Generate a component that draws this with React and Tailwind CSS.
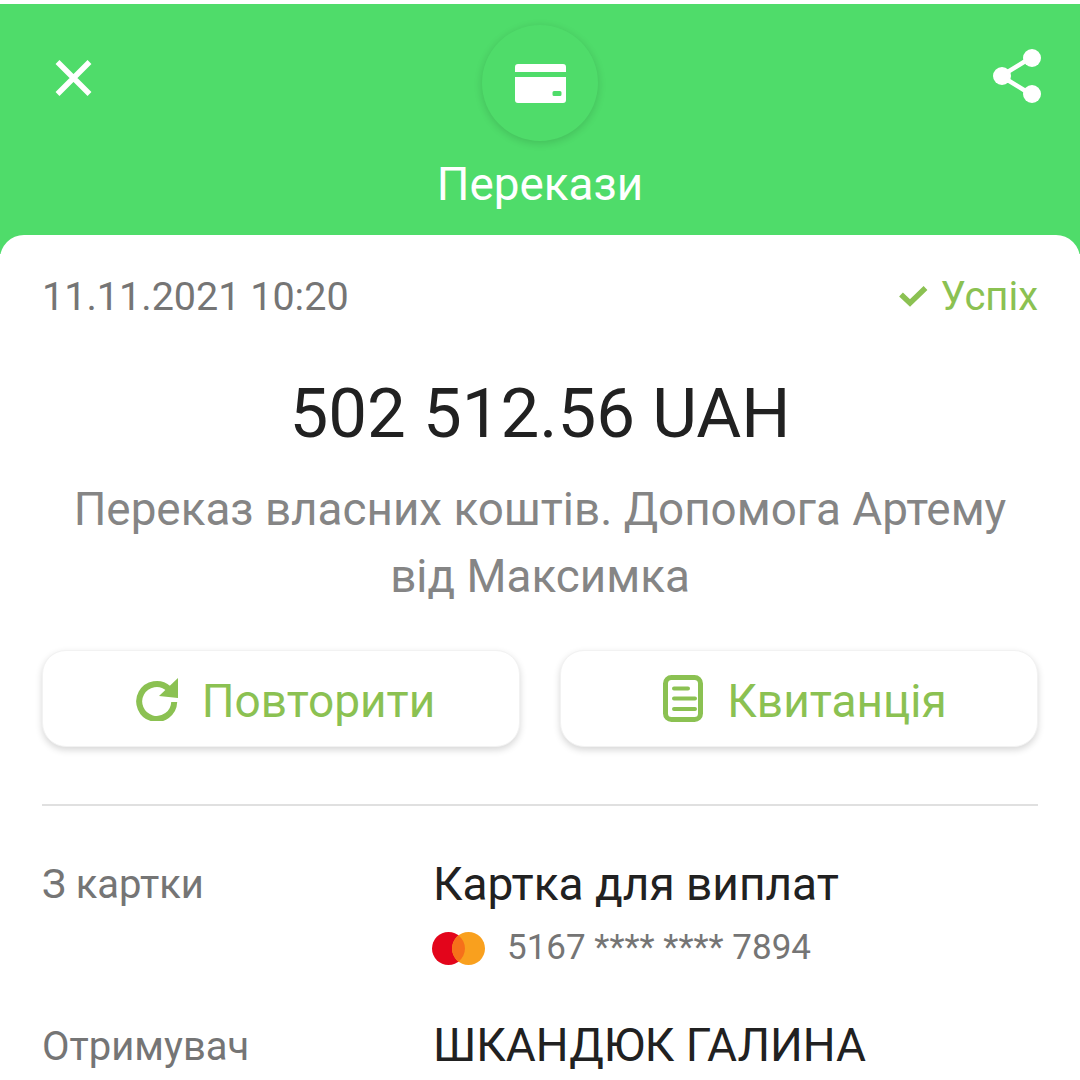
function ActionButton({ icon, label }) {
  return (
    <button className="flex-1 h-[97px] pl-[9px] rounded-[24px] bg-white border border-[#f2f2f2] shadow-[0_3px_7px_rgba(0,0,0,0.16)] flex items-center justify-center gap-[24px] text-[#8bc152] text-[46px] leading-none">
      {icon}
      <span className="pt-[5px]">{label}</span>
    </button>
  );
}

function CloseIcon() {
  return (
    <svg width="37" height="38" viewBox="0 0 37 38">
      <path d="M2.500 3 34.500 35M34.500 3 2.500 35" fill="none" stroke="#fff" strokeWidth="5.500" />
    </svg>
  );
}

function CardIcon() {
  return (
    <svg width="51" height="39" viewBox="0 0 51 39">
      <path fillRule="evenodd" fill="#fff" d="M3 0h45a3 3 0 0 1 3 3v5H0V3a3 3 0 0 1 3-3zM0 13h51v23a3 3 0 0 1-3 3H3a3 3 0 0 1-3-3zM39 27a1.500 1.500 0 0 0-1.500 1.500v2a1.500 1.500 0 0 0 1.500 1.500h6a1.500 1.500 0 0 0 1.500-1.500v-2a1.500 1.500 0 0 0-1.500-1.500z" />
    </svg>
  );
}

function ShareIcon() {
  return (
    <svg width="48" height="54" viewBox="0 0 48 54">
      <path d="M39 8 8 27l31 19" fill="none" stroke="#fff" strokeWidth="4.500" />
      <circle cx="39" cy="9" r="9" fill="#fff" />
      <circle cx="9" cy="27" r="9" fill="#fff" />
      <circle cx="39" cy="45" r="9" fill="#fff" />
    </svg>
  );
}

function CheckIcon() {
  return (
    <svg width="30" height="22" viewBox="0 0 30 22" className="-mt-[2px]">
      <path d="M2 9.500 11 18 26.500 3" fill="none" stroke="#8bc152" strokeWidth="5.500" />
    </svg>
  );
}

function RepeatIcon() {
  return (
    <svg width="42" height="44" viewBox="0 0 42 44">
      <path d="M32.500 11.500A17.500 17.500 0 1 0 38.200 25" fill="none" stroke="#8bc152" strokeWidth="6" />
      <path d="M42 1v20L23 19z" fill="#8bc152" />
    </svg>
  );
}

function ReceiptIcon() {
  return (
    <svg width="40" height="47" viewBox="0 0 40 47" className="ml-[3px]">
      <rect x="2.500" y="2.500" width="35" height="42" rx="6" fill="none" stroke="#8bc152" strokeWidth="5" />
      <path d="M11 13.500h14M11 23.500h21M11 34h21" stroke="#8bc152" strokeWidth="4" strokeLinecap="round" />
    </svg>
  );
}

function MastercardIcon() {
  return (
    <svg width="53" height="33" viewBox="0 0 53 33" className="-ml-[1px]">
      <circle cx="16.500" cy="16.500" r="16.500" fill="#e3051b" />
      <circle cx="36.500" cy="16.500" r="16.500" fill="#f9a01e" />
      <path d="M26.500 3.400a16.500 16.500 0 0 1 0 26.200a16.500 16.500 0 0 1 0-26.200z" fill="#f6701a" />
    </svg>
  );
}

export default function App() {
  return (
    <div className="w-[1080px] h-[1080px] overflow-hidden bg-white pt-[4px] font-['Roboto',sans-serif]">
      <header className="h-[250px] bg-[#4fdc6a] px-[42px] pt-[21px] flex flex-col items-center">
        <div className="w-full flex justify-between items-start">
          <div className="w-[100px] pt-[34px] pl-[13px]">
            <CloseIcon />
          </div>
          <div className="w-[116px] h-[116px] rounded-full bg-[#4fdc6a] shadow-[0_2px_8px_rgba(0,0,0,0.14)] flex items-center justify-center">
            <CardIcon />
          </div>
          <div className="w-[100px] pt-[24px] flex justify-end">
            <div className="-mr-[3px]">
              <ShareIcon />
            </div>
          </div>
        </div>
        <h1 className="mt-[18px] text-white text-[45.8px] leading-[52px] font-normal">Перекази</h1>
      </header>

      <main className="-mt-[19px] relative rounded-t-[24px] bg-white px-[42px] pt-[39px]">
        <div className="flex justify-between items-center h-[46px]">
          <span className="text-[39.5px] text-[#757575] leading-none">11.11.2021 10:20</span>
          <span className="flex items-center gap-[12px] text-[#8bc152] text-[40px] leading-none">
            <CheckIcon />
            Успіх
          </span>
        </div>

        <div className="mt-[52px] text-center text-[69px] leading-[84px] text-[#212121]">502 512.56 UAH</div>

        <p className="mt-[20px] text-center text-[45.8px] leading-[67px] text-[#858585]">
          Переказ власних коштів. Допомога Артему
          <br />
          від Максимка
        </p>

        <div className="mt-[40px] flex gap-[40px]">
          <ActionButton icon={<RepeatIcon />} label="Повторити" />
          <ActionButton icon={<ReceiptIcon />} label="Квитанція" />
        </div>

        <div className="mt-[57px] h-[2px] bg-[#e0e0e0]" />

        <div className="mt-[52px] flex">
          <div className="w-[391px] pt-[1px] text-[40px] leading-[52px] text-[#757575]">З картки</div>
          <div>
            <div className="text-[46px] leading-[52px] text-[#212121]">Картка для виплат</div>
            <div className="mt-[17px] flex items-center gap-[22px] text-[35px] leading-[42px] text-[#757575]">
              <MastercardIcon />
              5167 **** **** 7894
            </div>
          </div>
        </div>

        <div className="mt-[50px] flex">
          <div className="w-[391px] pt-[2px] text-[40px] leading-[52px] text-[#757575]">Отримувач</div>
          <div className="text-[46px] leading-[52px] text-[#212121]">ШКАНДЮК ГАЛИНА</div>
        </div>
      </main>
    </div>
  );
}
